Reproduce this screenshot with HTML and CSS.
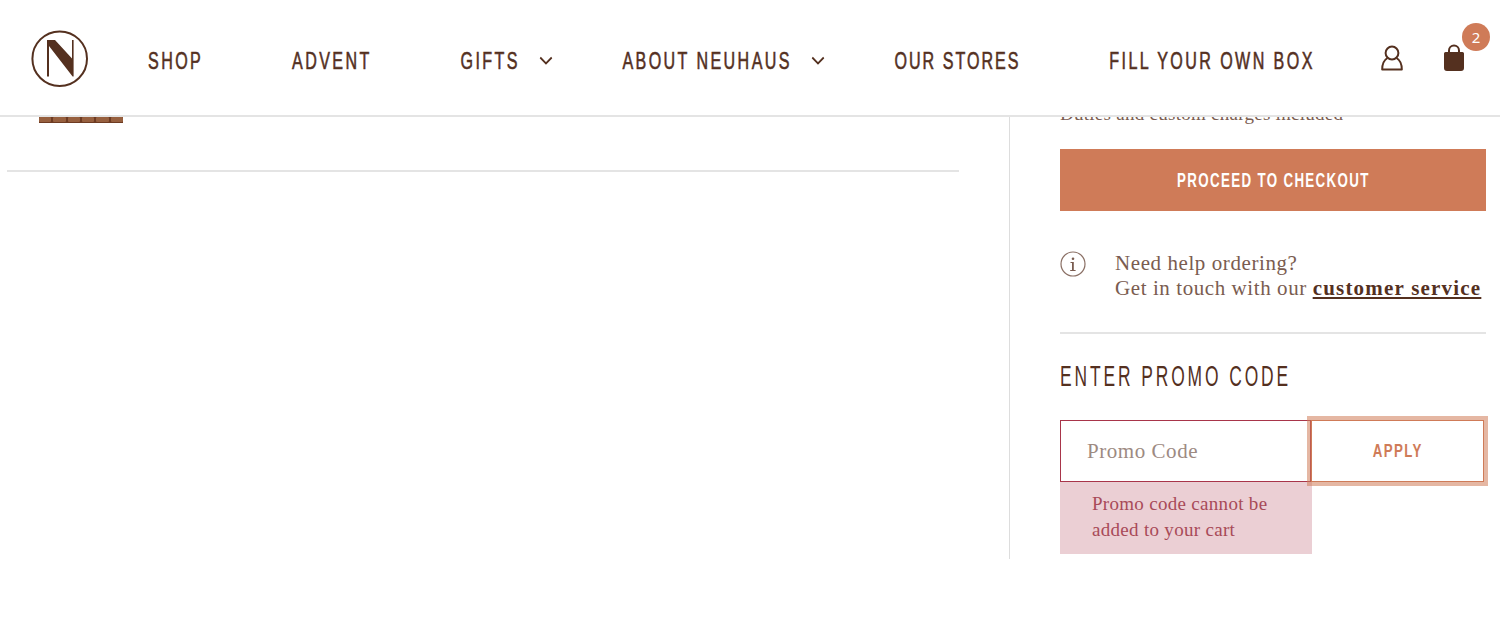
FILE: index.html
```html
<!DOCTYPE html>
<html lang="en">

<head>
  <meta charset="UTF-8">
  <meta name="viewport" content="width=device-width, initial-scale=1.0">
  <title>Neuhaus - Cart</title>
  <link rel="stylesheet" href="styles.css">
</head>

<body>
  <header class="site-header">
    <a class="site-logo" href="#">
      <svg width="58" height="58" viewBox="0 0 58 58">
        <circle cx="28.7" cy="28.7" r="27.3" fill="none" stroke="#54301f" stroke-width="2" />
        <path d="M16 10h8l17 18.500V10h1.600v36.500h-1L18 16v30.500h-2z" fill="#54301f" />
      </svg>
    </a>
    <nav class="site-nav">
      <a class="nav-item" href="#">SHOP</a>
      <a class="nav-item" href="#">ADVENT</a>
      <a class="nav-item nav-item--sub" href="#">GIFTS
        <svg class="nav-chevron" width="20" height="9" viewBox="0 0 14 9" preserveAspectRatio="none">
          <path d="M1 1.500 7 7.500l6-6" fill="none" stroke="#54301f" stroke-width="1.800" />
        </svg>
      </a>
      <a class="nav-item nav-item--sub" href="#">ABOUT NEUHAUS
        <svg class="nav-chevron" width="20" height="9" viewBox="0 0 14 9" preserveAspectRatio="none">
          <path d="M1 1.500 7 7.500l6-6" fill="none" stroke="#54301f" stroke-width="1.800" />
        </svg>
      </a>
      <a class="nav-item nav-item--tight" href="#">OUR STORES</a>
      <a class="nav-item" href="#">FILL YOUR OWN BOX</a>
    </nav>
    <div class="header-icons">
      <a class="header-icon" href="#">
        <svg width="22" height="26" viewBox="0 0 22 26">
          <circle cx="11" cy="8" r="6.400" fill="none" stroke="#54301f" stroke-width="2" />
          <path d="M6.500 13C3 15 1.200 19 1.200 24.600h19.600C20.800 19 19 15 15.500 13" fill="none" stroke="#54301f" stroke-width="2" stroke-linejoin="round" />
        </svg>
      </a>
      <a class="header-icon header-icon--cart" href="#">
        <svg width="22" height="27" viewBox="0 0 22 27">
          <path d="M6 9V6.500a5 5 0 0 1 10 0V9" fill="none" stroke="#54301f" stroke-width="2" />
          <path d="M2.500 8h17A1.500 1.500 0 0 1 21 9.500V24a3 3 0 0 1-3 3H4a3 3 0 0 1-3-3V9.500A1.500 1.500 0 0 1 2.500 8z" fill="#54301f" />
        </svg>
        <span class="cart-badge">2</span>
      </a>
    </div>
  </header>

  <main class="cart-page">
    <section class="cart-items">
      <div class="cart-item">
        <div class="choc-bar">
          <span></span><span></span><span></span><span></span><span></span><span></span>
        </div>
      </div>
    </section>

    <aside class="cart-summary">
      <p class="duties">Duties and custom charges included</p>
      <a class="checkout-btn" href="#"><span class="checkout-btn__label">PROCEED TO CHECKOUT</span></a>

      <div class="help">
        <svg class="help__icon" width="26" height="26" viewBox="0 0 26 26">
          <circle cx="13" cy="13" r="12" fill="none" stroke="#8a6f64" stroke-width="1.200" />
          <circle cx="13" cy="7.800" r="1.300" fill="#7a5c50" />
          <path d="M10.800 11h3v8h1.800v1h-5.400v-1h1.800v-7h-1.800z" fill="#7a5c50" />
        </svg>
        <p class="help__text">Need help ordering?<br>Get in touch with our <a href="#">customer service</a></p>
      </div>

      <div class="promo">
        <h2 class="promo__title"><span class="promo__title-text">ENTER PROMO CODE</span></h2>
        <div class="promo__row">
          <input class="promo__input" type="text" placeholder="Promo Code">
          <button class="promo__apply"><span class="promo__apply-label">APPLY</span></button>
        </div>
        <div class="promo__error">Promo code cannot be added to your cart</div>
      </div>
    </aside>
  </main>
</body>

</html>
```

FILE: styles.css
```css
body {
  margin: 0;
  background: #fff;
  color: #54301f;
  font-family: "Liberation Serif", serif;
}

a {
  color: inherit;
  text-decoration: none;
}

.site-header {
  position: fixed;
  top: 0;
  left: 0;
  right: 0;
  z-index: 10;
  box-sizing: border-box;
  height: 117px;
  display: flex;
  align-items: center;
  padding: 0 0 0 31px;
  background: #fff;
  border-bottom: 2px solid #e4e4e4;
}

.site-logo {
  display: flex;
  width: 58px;
  margin-top: 3px;
}

/* no condensed font here, so the whole nav is squeezed. margins are in unscaled px */
.site-nav {
  display: flex;
  flex: none;
  align-items: center;
  width: 1234px;
  margin-left: 59px;
  margin-top: 6px;
  transform: scaleX(0.67);
  transform-origin: left center;
}

.nav-item {
  display: flex;
  flex: none;
  align-items: center;
  margin-right: 132.5px;
  font-family: "Liberation Sans", sans-serif;
  font-size: 24px;
  letter-spacing: 3.6px;
  white-space: nowrap;
  -webkit-text-stroke: 0.6px #54301f;
}

.nav-item--sub {
  margin-right: 104px;
}

.nav-item--tight {
  letter-spacing: 3px;
}

.nav-chevron {
  margin-left: 29px;
}

.header-icons {
  display: flex;
  align-items: center;
  margin-left: -1px;
}

.header-icon {
  display: flex;
  position: relative;
}

.header-icon--cart {
  margin-left: 40px;
}

.cart-badge {
  position: absolute;
  top: -21px;
  left: 19px;
  width: 28px;
  height: 28px;
  border-radius: 50%;
  background: #cf7b58;
  color: #fff;
  font-family: "Noto Sans", sans-serif;
  font-size: 15px;
  line-height: 28px;
  text-align: center;
}

.cart-page {
  display: flex;
  align-items: flex-start;
  padding-top: 100px;
}

.cart-items {
  box-sizing: border-box;
  width: 1009px;
  padding: 0 50px 0 7px;
}

.cart-item {
  height: 70px;
  border-bottom: 2px solid #e4e4e4;
  padding-left: 32px;
}

.choc-bar {
  display: flex;
  gap: 2px;
  width: 84px;
  height: 23px;
  background: #6e3b22;
}

.choc-bar span {
  flex: 1;
  margin-top: 17px;
  height: 5px;
  border-radius: 1px;
  background: #97603f;
}

.cart-summary {
  box-sizing: border-box;
  width: 477px;
  height: 459px;
  padding-left: 50px;
  border-left: 1px solid #ddd;
  color: #7a5c50;
}

.duties {
  margin: 0;
  font-size: 19px;
  letter-spacing: 0.27px;
  line-height: 28px;
}

.checkout-btn {
  display: block;
  margin-top: 21px;
  height: 62px;
  background: #cf7b58;
  color: #fff;
  font-family: "Liberation Sans", sans-serif;
  font-size: 20px;
  font-weight: 700;
  letter-spacing: 2px;
  line-height: 62px;
  text-align: center;
}

.checkout-btn__label {
  display: inline-block;
  transform: scaleX(0.667);
}

.help {
  display: flex;
  gap: 29px;
  margin-top: 40px;
  padding-bottom: 31px;
  border-bottom: 2px solid #e4e4e4;
}

.help__icon {
  flex: none;
}

.help__text {
  margin: 0;
  font-size: 21px;
  letter-spacing: 0.58px;
  line-height: 25px;
}

.help__text a {
  color: #54301f;
  font-weight: 700;
  letter-spacing: 1.2px;
  text-decoration: underline;
}

.promo__title {
  margin: 25px 0 0;
  color: #54301f;
  font-family: "Liberation Sans", sans-serif;
  font-size: 30px;
  font-weight: 400;
  letter-spacing: 5px;
  line-height: 34px;
  white-space: nowrap;
}

.promo__title-text {
  display: inline-block;
  transform: scaleX(0.58);
  transform-origin: left center;
}

.promo__row {
  display: flex;
  margin-top: 27px;
}

.promo__input {
  box-sizing: border-box;
  width: 251px;
  height: 62px;
  padding: 0 26px;
  border: 1px solid #a8354a;
  border-radius: 0;
  outline: none;
  font-family: "Liberation Serif", serif;
  font-size: 21px;
  letter-spacing: 0.55px;
}

.promo__input::placeholder {
  color: #9d8a82;
}

.promo__apply {
  box-sizing: border-box;
  width: 173px;
  height: 62px;
  border: 1px solid #cf7b58;
  outline: 4px solid rgba(207, 123, 88, 0.55);
  background: #fff;
  color: #cf7b58;
  font-family: "Liberation Sans", sans-serif;
  font-size: 19px;
  font-weight: 700;
  letter-spacing: 2px;
}

.promo__apply-label {
  display: inline-block;
  transform: scaleX(0.7);
}

.promo__error {
  box-sizing: border-box;
  width: 252px;
  height: 72px;
  padding: 9px 20px 0 32px;
  background: #ebcfd4;
  color: #a84a58;
  font-size: 19px;
  letter-spacing: 0.3px;
  line-height: 26px;
}
```
